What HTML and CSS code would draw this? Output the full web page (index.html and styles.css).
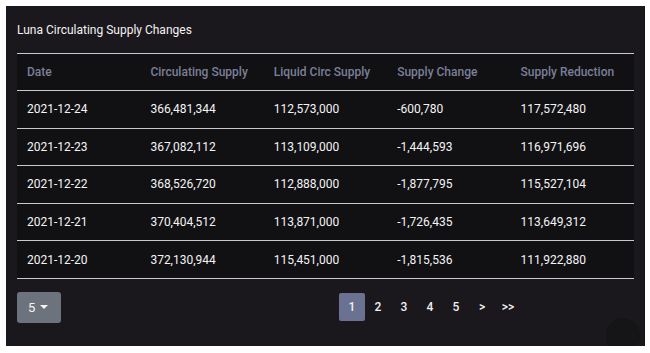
FILE: index.html
```html
<!DOCTYPE html>
<html>
<head>
<meta charset="utf-8">
<link rel="stylesheet" href="styles.css">
</head>
<body>
<div class="card">
  <div class="title">Luna Circulating Supply Changes</div>
  <table class="tbl">
    <thead>
      <tr><th>Date</th><th>Circulating Supply</th><th>Liquid Circ Supply</th><th>Supply Change</th><th>Supply Reduction</th></tr>
    </thead>
    <tbody>
      <tr><td>2021-12-24</td><td>366,481,344</td><td>112,573,000</td><td>-600,780</td><td>117,572,480</td></tr>
      <tr><td>2021-12-23</td><td>367,082,112</td><td>113,109,000</td><td>-1,444,593</td><td>116,971,696</td></tr>
      <tr><td>2021-12-22</td><td>368,526,720</td><td>112,888,000</td><td>-1,877,795</td><td>115,527,104</td></tr>
      <tr><td>2021-12-21</td><td>370,404,512</td><td>113,871,000</td><td>-1,726,435</td><td>113,649,312</td></tr>
      <tr><td>2021-12-20</td><td>372,130,944</td><td>115,451,000</td><td>-1,815,536</td><td>111,922,880</td></tr>
    </tbody>
  </table>
  <div class="footer">
    <div class="sizer">5 <span class="caret"></span></div>
    <div class="pager">
      <span class="pg active">1</span>
      <span class="pg">2</span>
      <span class="pg">3</span>
      <span class="pg">4</span>
      <span class="pg">5</span>
      <span class="pg">&gt;</span>
      <span class="pg">&gt;&gt;</span>
    </div>
  </div>
  <div class="fab"></div>
</div>
</body>
</html>
```

FILE: styles.css
```css
html, body { margin: 0; padding: 0; background: #ffffff; }
body { padding: 6px 5px 0 6px; font-family: Roboto, "Liberation Sans", sans-serif; }
.card {
  position: relative;
  background: #1a181c;
  height: 340px;
  padding: 0 10px 0 11px;
  box-sizing: border-box;
  overflow: hidden;
  border-right: 1px solid #141316;
}
.title {
  color: #f2f2f2;
  font-size: 12px;
  padding-top: 17px;
  height: 30px;
  box-sizing: border-box;
  line-height: 14px;
}
.tbl {
  width: 617px;
  border-collapse: collapse;
  margin-top: 17px;
  background: #111114;
  table-layout: fixed;
  font-size: 12px;
}
.tbl th, .tbl td {
  text-align: left;
  padding: 0 10px;
  height: 37px;
  border-top: 1px solid #c9c9cc;
  box-sizing: border-box;
}
.tbl td { height: 37.6px; }
.tbl tbody tr:last-child td { border-bottom: 1px solid #c9c9cc; }
.tbl th { color: #7b7f98; font-weight: 500; }
.tbl td { color: #f4f4f4; font-weight: 400; }
.footer {
  display: flex;
  align-items: center;
  margin-top: 13px;
}
.sizer {
  width: 44px;
  height: 31px;
  background: #6c737d;
  border-radius: 3px;
  color: #f4f4f4;
  font-size: 13px;
  display: flex;
  align-items: center;
  padding-left: 11px;
  box-sizing: border-box;
  gap: 5px;
}
.caret {
  width: 0; height: 0;
  border-left: 4px solid transparent;
  border-right: 4px solid transparent;
  border-top: 4px solid #f4f4f4;
}
.pager {
  display: flex;
  margin-left: 278px;
  align-items: center;
}
.pg {
  width: 26px;
  height: 28px;
  display: flex;
  align-items: center;
  justify-content: center;
  color: #f0f0f0;
  font-size: 12px;
  font-weight: 500;
}
.pg.active { background: #6b7190; border-radius: 2px; }
.fab {
  position: absolute;
  right: 4px;
  bottom: -8px;
  width: 34px;
  height: 36px;
  border-radius: 50%;
  background: #151417;
}
```
